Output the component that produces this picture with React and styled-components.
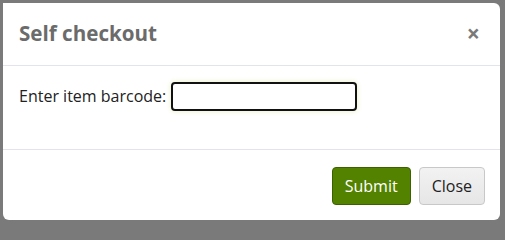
import React from "react";
import styled, { createGlobalStyle } from "styled-components";

const Global = createGlobalStyle`
  html, body { margin: 0; padding: 0; }
  body {
    background: #7a7a7a;
    font-family: "Open Sans", "Noto Sans", sans-serif;
    width: 505px;
    height: 225px;
    overflow: hidden;
  }
`;

const Page = styled.div`
  padding: 3px 5px 5px 3px;
  box-sizing: border-box;
  width: 505px;
  height: 225px;
`;

const Modal = styled.div`
  background: #fff;
  border-radius: 0 6px 6px 6px;
  height: 217px;
  display: flex;
  flex-direction: column;
  overflow: hidden;
`;

const Header = styled.div`
  height: 63px;
  box-sizing: border-box;
  display: flex;
  align-items: center;
  justify-content: space-between;
  padding: 0 20px 2px 16px;
  border-bottom: 1px solid #e3e3ea;
`;

const Title = styled.h1`
  margin: 0;
  font-size: 20.6px;
  font-weight: 700;
  color: #6b6b6b;
`;

const CloseX = styled.button`
  border: 0;
  background: none;
  padding: 0;
  font-family: "Open Sans", sans-serif;
  font-size: 23px;
  font-weight: 700;
  color: #7a7a7a;
  line-height: 1;
  cursor: pointer;
`;

const Body = styled.div`
  height: 84px;
  box-sizing: border-box;
  display: flex;
  align-items: flex-start;
  padding: 16px 16px 0;
  border-bottom: 1px solid #e3e3ea;
  gap: 5px;
`;

const Label = styled.label`
  font-size: 16px;
  line-height: 29px;
  color: #222;
`;

const Input = styled.input`
  width: 186px;
  height: 29px;
  box-sizing: border-box;
  border: 2px solid #111;
  border-radius: 4px;
  box-shadow: 0 0 4px 1px rgba(235, 240, 200, 0.8);
  outline: none;
  font-size: 16px;
  padding: 0 6px;
`;

const Footer = styled.div`
  flex: 1;
  display: flex;
  align-items: flex-start;
  justify-content: flex-end;
  gap: 8px;
  padding: 17px 15px 0 0;
`;

const Button = styled.button`
  height: 38px;
  box-sizing: border-box;
  padding: 0 12px;
  border-radius: 4px;
  font-family: "Open Sans", sans-serif;
  font-size: 16px;
  border: 1px solid ${(p) => (p.$primary ? "#3d6100" : "#c8c8c8")};
  background: ${(p) => (p.$primary ? "#538200" : "linear-gradient(#f2f2f2, #e6e6e6)")};
  color: ${(p) => (p.$primary ? "#fff" : "#222")};
  cursor: pointer;
`;

export default function App() {
  return (
    <>
      <Global />
      <Page>
        <Modal>
          <Header>
            <Title>Self checkout</Title>
            <CloseX aria-label="Close">×</CloseX>
          </Header>
          <Body>
            <Label htmlFor="barcode">Enter item barcode:</Label>
            <Input id="barcode" />
          </Body>
          <Footer>
            <Button $primary>Submit</Button>
            <Button>Close</Button>
          </Footer>
        </Modal>
      </Page>
    </>
  );
}
